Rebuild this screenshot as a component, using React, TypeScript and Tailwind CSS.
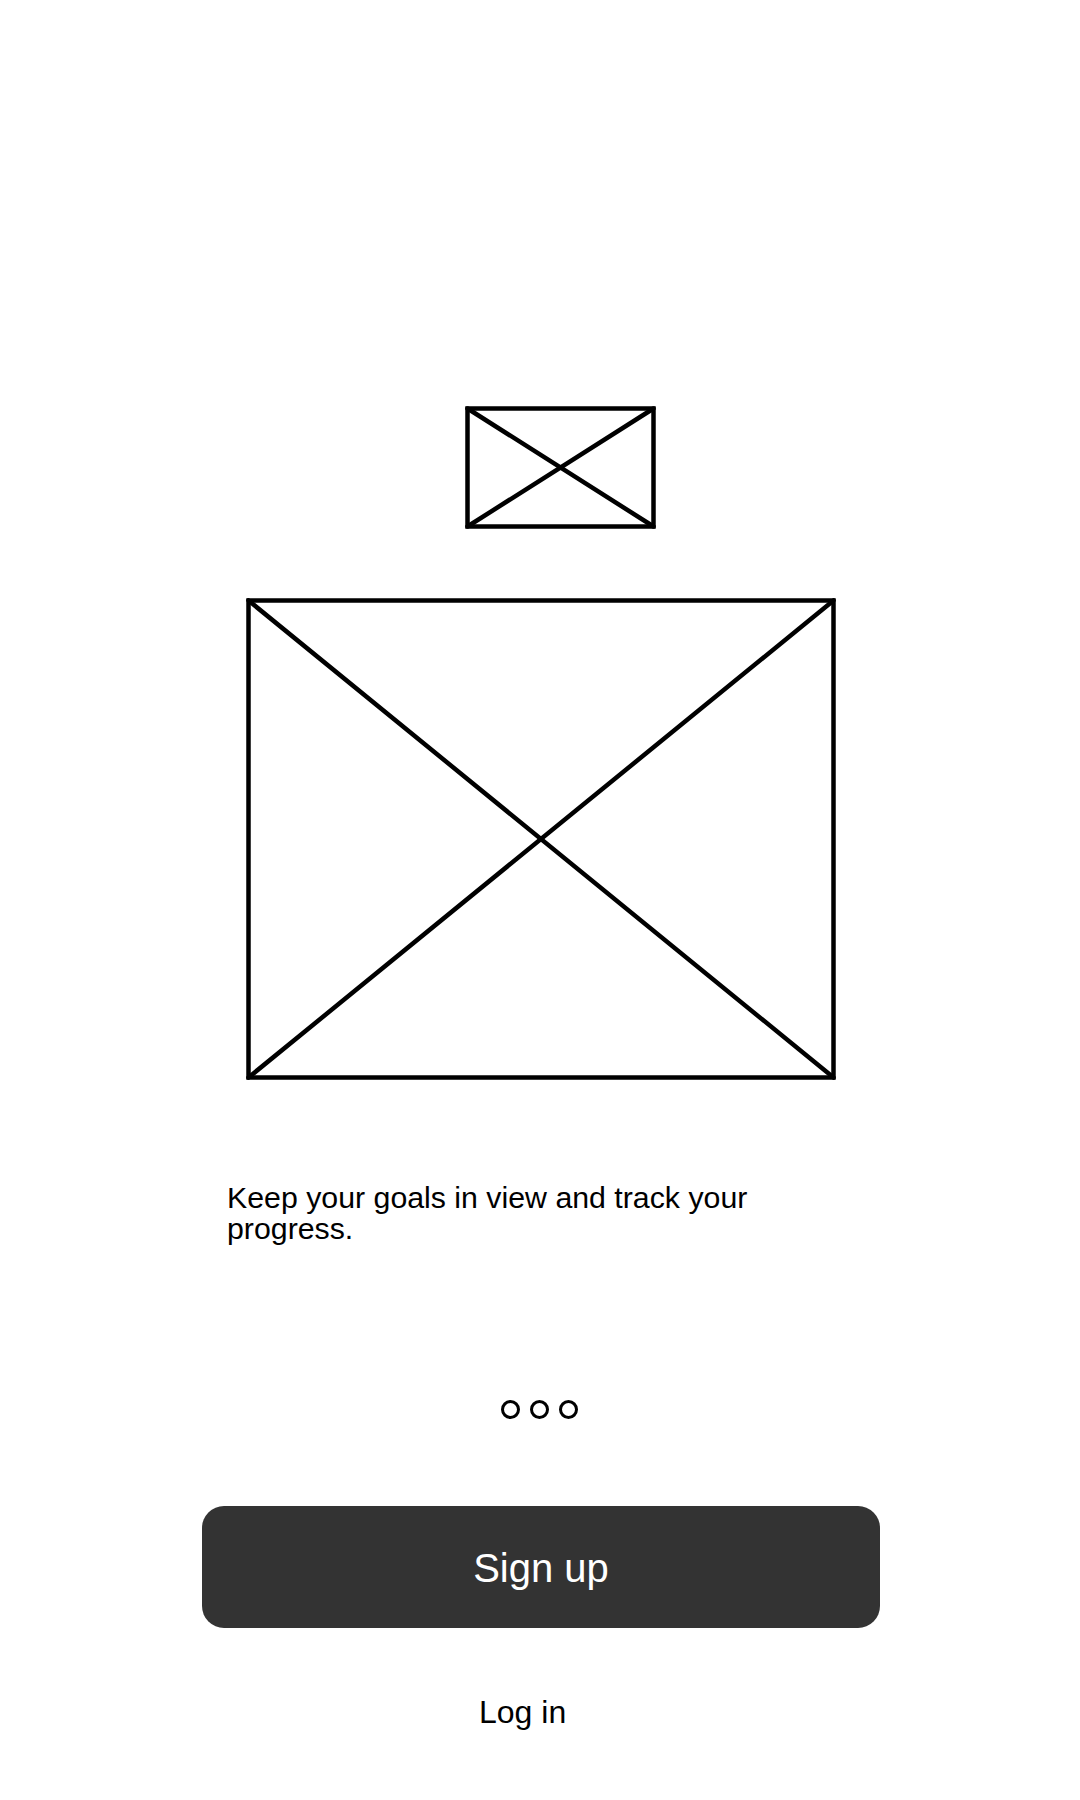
import React from 'react'

// wireframe image placeholder: box with both diagonals
function Placeholder({ width, height }: { width: number; height: number }) {
  const w = width - 5
  const h = height - 5
  return (
    <svg width={width} height={height} viewBox={`0 0 ${width} ${height}`} className="block shrink-0">
      <rect x={2.5} y={2.5} width={w} height={h} fill="none" stroke="#000" strokeWidth={4.5} />
      <line x1={2.5} y1={2.5} x2={2.5 + w} y2={2.5 + h} stroke="#000" strokeWidth={4.5} strokeLinecap="round" />
      <line x1={2.5 + w} y1={2.5} x2={2.5} y2={2.5 + h} stroke="#000" strokeWidth={4.5} strokeLinecap="round" />
    </svg>
  )
}

export default function App() {
  return (
    <div className="flex min-h-[1800px] w-[1080px] flex-col items-start bg-white pt-[406px] font-['Liberation_Sans',Arial,sans-serif] text-black">
      <div className="ml-[465px]">
        <Placeholder width={191} height={123} />
      </div>

      <div className="ml-[246px] mt-[69px]">
        <Placeholder width={590} height={482} />
      </div>

      <p className="ml-[227px] mt-[102px] w-[560px] text-[30.3px] leading-[31px]">
        Keep your goals in view and track your progress.
      </p>

      <div className="ml-[501px] mt-[156px] flex gap-[10px]">
        {[0, 1, 2].map((i) => (
          <span key={i} className="block h-[19px] w-[19px] rounded-full border-[3px] border-black" />
        ))}
      </div>

      <button className="ml-[202px] mt-[87px] flex h-[122px] w-[678px] items-center justify-center rounded-[22px] bg-[#333333] pt-[2px] text-[40px] text-white">
        Sign up
      </button>

      <button className="ml-[479px] mt-[66px] text-[32px] leading-[36px] text-black">
        Log in
      </button>
    </div>
  )
}
